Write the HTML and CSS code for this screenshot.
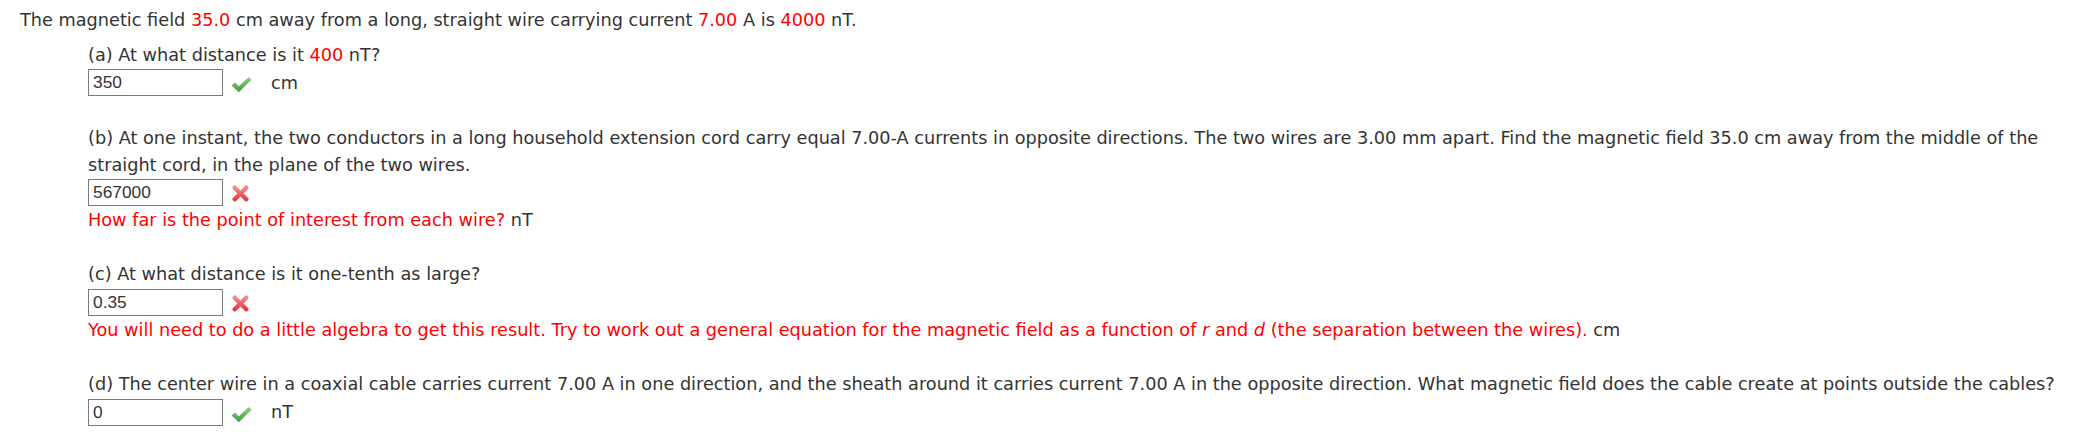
FILE: index.html
```html
<!DOCTYPE html>
<html lang="en">
<head>
<meta charset="utf-8">
<title>Magnetic field question</title>
<link rel="stylesheet" href="styles.css">
</head>
<body>
<div class="question">
  <p class="intro">The magnetic field <span class="red">35.0</span> cm away from a long, straight wire carrying current <span class="red">7.00</span> A is <span class="red">4000</span> nT.</p>

  <div class="part">
    <p class="prompt">(a) At what distance is it <span class="red">400</span> nT?</p>
    <div class="answer-row">
      <input class="answer" type="text" value="350">
      <span class="mark mark-ok"><svg viewBox="0 0 21 17" width="21" height="17"><defs><linearGradient id="g1" x1="0" y1="0" x2="0" y2="1"><stop offset="0" stop-color="#8fd18a"/><stop offset="1" stop-color="#3f9a3f"/></linearGradient></defs><path d="M0.5 9.5 L3.8 6.4 L7.8 10.2 L17.6 1 L20.6 3.8 L7.8 16.2 Z" fill="url(#g1)"/></svg></span>
      <span class="unit">cm</span>
    </div>
  </div>

  <div class="part">
    <p class="prompt">(b) At one instant, the two conductors in a long household extension cord carry equal 7.00-A currents in opposite directions. The two wires are 3.00 mm apart. Find the magnetic field 35.0 cm away from the middle of the straight cord, in the plane of the two wires.</p>
    <div class="answer-row">
      <input class="answer" type="text" value="567000">
      <span class="mark mark-bad"><svg viewBox="0 0 17 17" width="17" height="17"><defs><linearGradient id="r1" x1="0" y1="0" x2="0" y2="1"><stop offset="0" stop-color="#f7898c"/><stop offset="1" stop-color="#e53a40"/></linearGradient></defs><path d="M2.7 2.7 L14.3 14.3 M14.3 2.7 L2.7 14.3" stroke="url(#r1)" stroke-width="4.4" stroke-linecap="round"/></svg></span>
    </div>
    <p class="hint"><span class="red">How far is the point of interest from each wire?</span> nT</p>
  </div>

  <div class="part">
    <p class="prompt">(c) At what distance is it one-tenth as large?</p>
    <div class="answer-row">
      <input class="answer" type="text" value="0.35">
      <span class="mark mark-bad"><svg viewBox="0 0 17 17" width="17" height="17"><defs><linearGradient id="r2" x1="0" y1="0" x2="0" y2="1"><stop offset="0" stop-color="#f7898c"/><stop offset="1" stop-color="#e53a40"/></linearGradient></defs><path d="M2.7 2.7 L14.3 14.3 M14.3 2.7 L2.7 14.3" stroke="url(#r2)" stroke-width="4.4" stroke-linecap="round"/></svg></span>
    </div>
    <p class="hint"><span class="red">You will need to do a little algebra to get this result. Try to work out a general equation for the magnetic field as a function of <i>r</i> and <i>d</i> (the separation between the wires).</span> cm</p>
  </div>

  <div class="part">
    <p class="prompt">(d) The center wire in a coaxial cable carries current 7.00 A in one direction, and the sheath around it carries current 7.00 A in the opposite direction. What magnetic field does the cable create at points outside the cables?</p>
    <div class="answer-row">
      <input class="answer" type="text" value="0">
      <span class="mark mark-ok"><svg viewBox="0 0 21 17" width="21" height="17"><defs><linearGradient id="g2" x1="0" y1="0" x2="0" y2="1"><stop offset="0" stop-color="#8fd18a"/><stop offset="1" stop-color="#3f9a3f"/></linearGradient></defs><path d="M0.5 9.5 L3.8 6.4 L7.8 10.2 L17.6 1 L20.6 3.8 L7.8 16.2 Z" fill="url(#g2)"/></svg></span>
      <span class="unit">nT</span>
    </div>
  </div>
</div>
</body>
</html>
```

FILE: styles.css
```css
html, body {
  margin: 0;
  background: #ffffff;
}

body {
  padding: 7px 20px 0 20px;
  font-family: "DejaVu Sans", Verdana, sans-serif;
  font-size: 17.7px;
  line-height: 26.67px;
  color: #333333;
}

p {
  margin: 0;
}

.red {
  color: #ff0000;
}

.intro {
  margin-bottom: 8px;
}

.part {
  margin: 0 0 27.5px 68px;
}

.answer-row {
  display: flex;
  align-items: center;
  height: 29px;
}

.answer {
  box-sizing: border-box;
  width: 135px;
  height: 27px;
  margin: 0;
  padding: 0 4px;
  border: 1px solid #7a7a7a;
  border-radius: 0;
  font-family: "Liberation Sans", Arial, sans-serif;
  font-size: 17.33px;
  color: #333333;
  background: #ffffff;
}

.mark {
  display: flex;
  align-items: center;
}

.mark-ok {
  margin-left: 8px;
  padding-top: 4px;
}

.mark-bad {
  margin-left: 9px;
  padding-top: 2px;
}

.unit {
  margin-left: 19px;
}
```
